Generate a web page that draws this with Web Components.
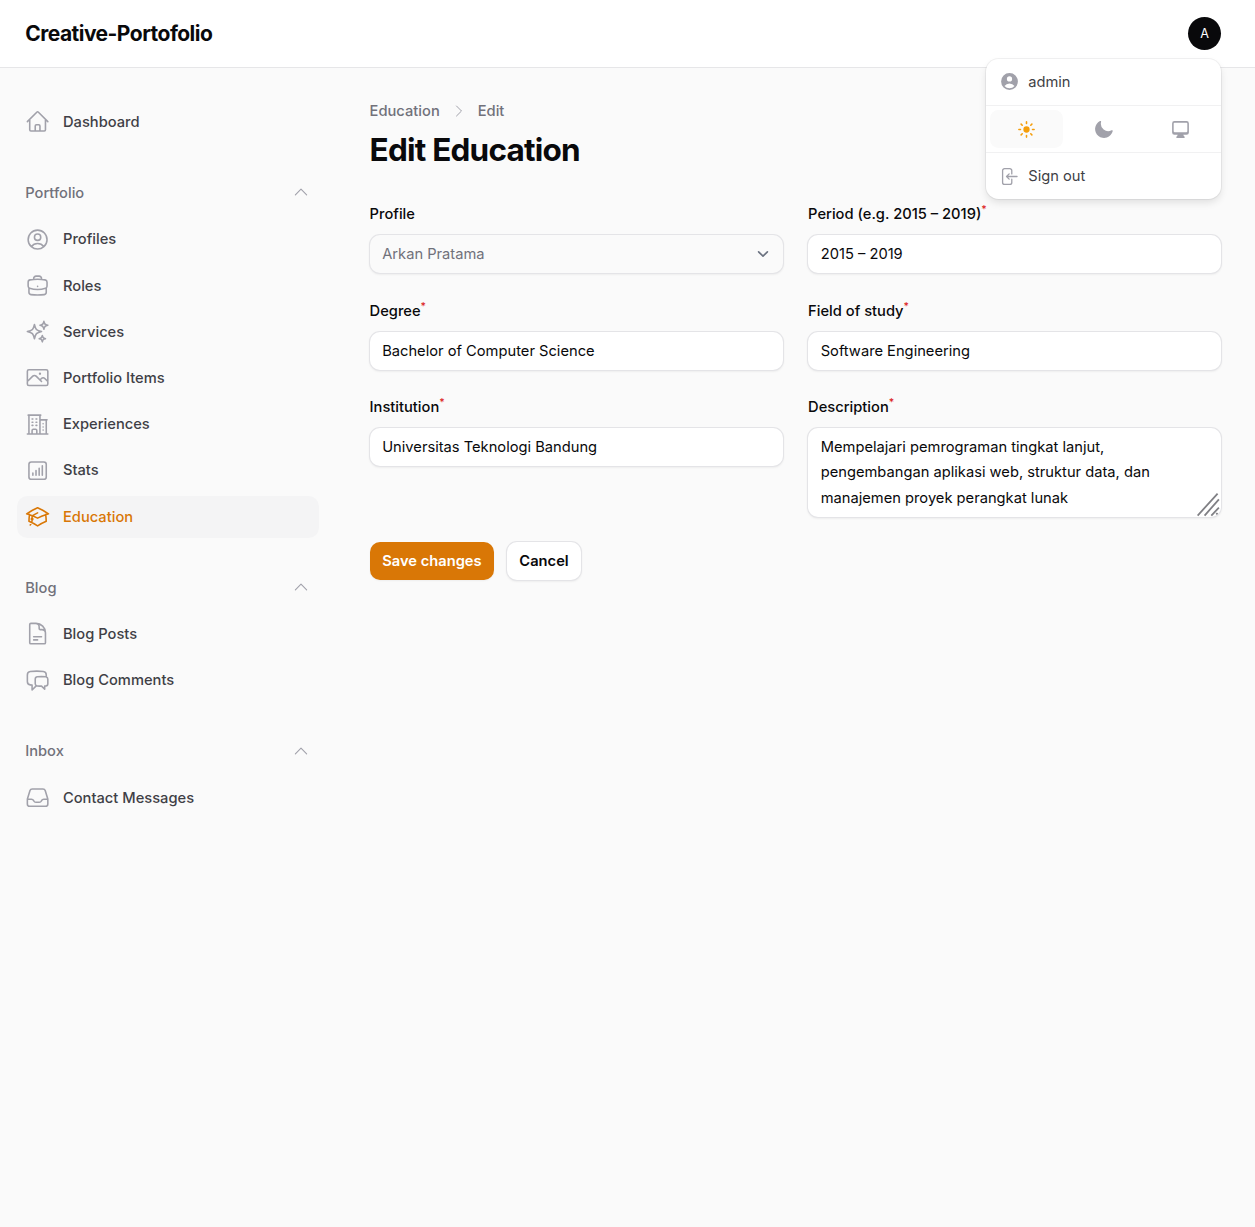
<!DOCTYPE html>
<html lang="en">
<head>
<meta charset="utf-8">
<title>Edit Education</title>
<style>
  html, body { margin: 0; padding: 0; background: #fafafa; }
  body { font-family: Inter, "Liberation Sans", sans-serif; color: #09090b; min-height: 1227px; }
</style>
</head>
<body>
<app-shell>
  <app-topbar slot="top" brand="Creative-Portofolio"></app-topbar>
  <app-sidebar slot="side">
    <nav-item icon="home" label="Dashboard"></nav-item>
    <nav-group label="Portfolio">
      <nav-item icon="user" label="Profiles"></nav-item>
      <nav-item icon="briefcase" label="Roles"></nav-item>
      <nav-item icon="sparkles" label="Services"></nav-item>
      <nav-item icon="photo" label="Portfolio Items"></nav-item>
      <nav-item icon="building" label="Experiences"></nav-item>
      <nav-item icon="chart" label="Stats"></nav-item>
      <nav-item icon="cap" label="Education" active></nav-item>
    </nav-group>
    <nav-group label="Blog">
      <nav-item icon="doc" label="Blog Posts"></nav-item>
      <nav-item icon="chat" label="Blog Comments"></nav-item>
    </nav-group>
    <nav-group label="Inbox">
      <nav-item icon="inbox" label="Contact Messages"></nav-item>
    </nav-group>
  </app-sidebar>
  <edit-page slot="main">
    <form-field label="Profile" value="Arkan Pratama" type="select"></form-field>
    <form-field label="Period (e.g. 2015 – 2019)" value="2015 – 2019" required></form-field>
    <form-field label="Degree" value="Bachelor of Computer Science" required></form-field>
    <form-field label="Field of study" value="Software Engineering" required></form-field>
    <form-field label="Institution" value="Universitas Teknologi Bandung" required></form-field>
    <form-field label="Description" type="textarea" required value="Mempelajari pemrograman tingkat lanjut,|pengembangan aplikasi web, struktur data, dan|manajemen proyek perangkat lunak"></form-field>
  </edit-page>
</app-shell>

<script>
const ICONS = {
  home: 'm2.25 12 8.954-8.955c.44-.439 1.152-.439 1.591 0L21.75 12M4.5 9.75v10.125c0 .621.504 1.125 1.125 1.125H9.75v-4.875c0-.621.504-1.125 1.125-1.125h2.25c.621 0 1.125.504 1.125 1.125V21h4.125c.621 0 1.125-.504 1.125-1.125V9.75M8.25 21h8.25',
  user: 'M17.982 18.725A7.488 7.488 0 0 0 12 15.75a7.488 7.488 0 0 0-5.982 2.975m11.963 0a9 9 0 1 0-11.963 0m11.963 0A8.966 8.966 0 0 1 12 21a8.966 8.966 0 0 1-5.982-2.275M15 9.75a3 3 0 1 1-6 0 3 3 0 0 1 6 0Z',
  briefcase: 'M20.25 14.15v4.25c0 1.094-.787 2.036-1.872 2.18-2.087.277-4.216.42-6.378.42s-4.291-.143-6.378-.42c-1.085-.144-1.872-1.086-1.872-2.18v-4.25m16.5 0a2.18 2.18 0 0 0 .75-1.661V8.706c0-1.081-.768-2.015-1.837-2.175a48.114 48.114 0 0 0-3.413-.387m4.5 8.006c-.194.165-.42.295-.673.38A23.978 23.978 0 0 1 12 15.75c-2.648 0-5.195-.429-7.577-1.22a2.016 2.016 0 0 1-.673-.38m0 0A2.18 2.18 0 0 1 3 12.489V8.706c0-1.081.768-2.015 1.837-2.175a48.111 48.111 0 0 1 3.413-.387m7.5 0V5.25A2.25 2.25 0 0 0 13.5 3h-3a2.25 2.25 0 0 0-2.25 2.25v.894m7.5 0a48.667 48.667 0 0 0-7.5 0M12 12.75h.008v.008H12v-.008Z',
  sparkles: 'M9.813 15.904 9 18.75l-.813-2.846a4.5 4.5 0 0 0-3.09-3.09L2.25 12l2.846-.813a4.5 4.5 0 0 0 3.09-3.09L9 5.25l.813 2.846a4.5 4.5 0 0 0 3.09 3.09L15.75 12l-2.846.813a4.5 4.5 0 0 0-3.09 3.09ZM18.259 8.715 18 9.75l-.259-1.035a3.375 3.375 0 0 0-2.455-2.456L14.25 6l1.036-.259a3.375 3.375 0 0 0 2.455-2.456L18 2.25l.259 1.035a3.375 3.375 0 0 0 2.456 2.456L21.75 6l-1.035.259a3.375 3.375 0 0 0-2.456 2.456ZM16.894 20.567 16.5 21.75l-.394-1.183a2.25 2.25 0 0 0-1.423-1.423L13.5 18.75l1.183-.394a2.25 2.25 0 0 0 1.423-1.423l.394-1.183.394 1.183a2.25 2.25 0 0 0 1.423 1.423l1.183.394-1.183.394a2.25 2.25 0 0 0-1.423 1.423Z',
  photo: 'm2.25 15.75 5.159-5.159a2.25 2.25 0 0 1 3.182 0l5.159 5.159m-1.5-1.5 1.409-1.409a2.25 2.25 0 0 1 3.182 0l2.909 2.909m-18 3.75h16.5a1.5 1.5 0 0 0 1.5-1.5V6a1.5 1.5 0 0 0-1.5-1.5H3.75A1.5 1.5 0 0 0 2.25 6v12a1.5 1.5 0 0 0 1.5 1.5Zm10.5-11.25h.008v.008h-.008V8.25Zm.375 0a.375.375 0 1 1-.75 0 .375.375 0 0 1 .75 0Z',
  building: 'M2.25 21h19.5m-18-18v18m10.5-18v18m6-13.5V21M6.75 6.75h.75m-.75 3h.75m-.75 3h.75m3-6h.75m-.75 3h.75m-.75 3h.75M6.75 21v-3.375c0-.621.504-1.125 1.125-1.125h2.25c.621 0 1.125.504 1.125 1.125V21M3 3h12m-.75 4.5H21m-3.75 3.75h.008v.008h-.008v-.008Zm0 3h.008v.008h-.008v-.008Zm0 3h.008v.008h-.008v-.008Z',
  chart: 'M7.5 14.25v2.25m3-4.5v4.5m3-6.75v6.75m3-9v9M6 20.25h12A2.25 2.25 0 0 0 20.25 18V6A2.25 2.25 0 0 0 18 3.75H6A2.25 2.25 0 0 0 3.75 6v12A2.25 2.25 0 0 0 6 20.25Z',
  cap: 'M4.26 10.147a60.438 60.438 0 0 0-.491 6.347A48.62 48.62 0 0 1 12 20.904a48.62 48.62 0 0 1 8.232-4.41 60.46 60.46 0 0 0-.491-6.347m-15.482 0a50.636 50.636 0 0 0-2.658-.813A59.906 59.906 0 0 1 12 3.493a59.903 59.903 0 0 1 10.399 5.84c-.896.248-1.783.52-2.658.814m-15.482 0A50.717 50.717 0 0 1 12 13.489a50.702 50.702 0 0 1 7.74-3.342M6.75 15a.75.75 0 1 0 0-1.5.75.75 0 0 0 0 1.5Zm0 0v-3.675A55.378 55.378 0 0 1 12 8.443m-7.007 11.55A5.981 5.981 0 0 0 6.75 15.75v-1.5',
  doc: 'M19.5 14.25v-2.625a3.375 3.375 0 0 0-3.375-3.375h-1.5A1.125 1.125 0 0 1 13.5 7.125v-1.5a3.375 3.375 0 0 0-3.375-3.375H8.25m0 12.75h7.5m-7.5 3H12M10.5 2.25H5.625c-.621 0-1.125.504-1.125 1.125v17.25c0 .621.504 1.125 1.125 1.125h12.75c.621 0 1.125-.504 1.125-1.125V11.25a9 9 0 0 0-9-9Z',
  chat: 'M20.25 8.511c.884.284 1.5 1.128 1.5 2.097v4.286c0 1.136-.847 2.1-1.98 2.193-.34.027-.68.052-1.02.072v3.091l-3-3c-1.354 0-2.694-.055-4.02-.163a2.115 2.115 0 0 1-.825-.242m9.345-8.334a2.126 2.126 0 0 0-.476-.095 48.64 48.64 0 0 0-8.048 0c-1.131.094-1.976 1.057-1.976 2.192v4.286c0 .837.46 1.58 1.155 1.951m9.345-8.334V6.637c0-1.621-1.152-3.026-2.76-3.235A48.455 48.455 0 0 0 11.25 3c-2.115 0-4.198.137-6.24.402-1.608.209-2.76 1.614-2.76 3.235v6.226c0 1.621 1.152 3.026 2.76 3.235.577.075 1.157.14 1.74.194V21l4.155-4.155',
  inbox: 'M2.25 13.5h3.86a2.25 2.25 0 0 1 2.012 1.244l.256.512a2.25 2.25 0 0 0 2.013 1.244h3.218a2.25 2.25 0 0 0 2.013-1.244l.256-.512a2.25 2.25 0 0 1 2.013-1.244h3.859m-19.5.338V18a2.25 2.25 0 0 0 2.25 2.25h15A2.25 2.25 0 0 0 21.75 18v-4.162c0-.224-.034-.447-.1-.661L19.24 5.338a2.25 2.25 0 0 0-2.15-1.588H6.911a2.25 2.25 0 0 0-2.15 1.588L2.35 13.177a2.25 2.25 0 0 0-.1.661Z',
  signout: 'M15.75 9V5.25A2.25 2.25 0 0 0 13.5 3h-6a2.25 2.25 0 0 0-2.25 2.25v13.5A2.25 2.25 0 0 0 7.5 21h6a2.25 2.25 0 0 0 2.25-2.25V15m-3 0-3-3m0 0 3-3m-3 3H21.75',
  chevronUp: 'm4.5 15.75 7.5-7.5 7.5 7.5',
  chevronRight: 'm8.25 4.5 7.5 7.5-7.5 7.5'
};

const SOLID = {
  user: 'M18 10a8 8 0 1 1-16 0 8 8 0 0 1 16 0Zm-5.5-2.5a2.5 2.5 0 1 1-5 0 2.5 2.5 0 0 1 5 0ZM10 12a5.99 5.99 0 0 0-4.793 2.39A6.483 6.483 0 0 0 10 16.5a6.483 6.483 0 0 0 4.793-2.11A5.99 5.99 0 0 0 10 12Z',
  sun: 'M10 2a.75.75 0 0 1 .75.75v1.5a.75.75 0 0 1-1.5 0v-1.5A.75.75 0 0 1 10 2ZM10 15a.75.75 0 0 1 .75.75v1.5a.75.75 0 0 1-1.5 0v-1.5A.75.75 0 0 1 10 15ZM10 7a3 3 0 1 0 0 6 3 3 0 0 0 0-6ZM15.657 5.404a.75.75 0 1 0-1.06-1.06l-1.061 1.06a.75.75 0 0 0 1.06 1.06l1.06-1.06ZM6.464 14.596a.75.75 0 1 0-1.06-1.06l-1.06 1.06a.75.75 0 0 0 1.06 1.06l1.06-1.06ZM18 10a.75.75 0 0 1-.75.75h-1.5a.75.75 0 0 1 0-1.5h1.5A.75.75 0 0 1 18 10ZM5 10a.75.75 0 0 1-.75.75h-1.5a.75.75 0 0 1 0-1.5h1.5A.75.75 0 0 1 5 10ZM14.596 15.657a.75.75 0 0 0 1.06-1.06l-1.06-1.061a.75.75 0 1 0-1.06 1.06l1.06 1.06ZM5.404 6.464a.75.75 0 0 0 1.06-1.06l-1.06-1.06a.75.75 0 1 0-1.061 1.06l1.06 1.06Z',
  moon: 'M7.455 2.004a.75.75 0 0 1 .26.77 7 7 0 0 0 9.958 7.967.75.75 0 0 1 1.067.853A8.5 8.5 0 1 1 6.647 1.921a.75.75 0 0 1 .808.083Z',
  desktop: 'M2 4.25A2.25 2.25 0 0 1 4.25 2h11.5A2.25 2.25 0 0 1 18 4.25v8.5A2.25 2.25 0 0 1 15.75 15h-3.105a3.501 3.501 0 0 0 1.1 1.677A.75.75 0 0 1 13.26 18H6.74a.75.75 0 0 1-.484-1.323A3.501 3.501 0 0 0 7.355 15H4.25A2.25 2.25 0 0 1 2 12.75v-8.5Zm1.5 0a.75.75 0 0 1 .75-.75h11.5a.75.75 0 0 1 .75.75v7.5a.75.75 0 0 1-.75.75H4.25a.75.75 0 0 1-.75-.75v-7.5Z'
};

function outline(name, size, color) {
  return `<svg width="${size}" height="${size}" viewBox="0 0 24 24" fill="none" stroke="${color}" stroke-width="1.5" stroke-linecap="round" stroke-linejoin="round"><path d="${ICONS[name]}"/></svg>`;
}
function solid(name, size, color) {
  return `<svg width="${size}" height="${size}" viewBox="0 0 20 20" fill="${color}"><path fill-rule="evenodd" clip-rule="evenodd" d="${SOLID[name]}"/></svg>`;
}

class AppShell extends HTMLElement {
  constructor() {
    super();
    this.attachShadow({ mode: 'open' });
    this.shadowRoot.innerHTML = `
      <style>
        :host { display: block; }
        .body { display: grid; grid-template-columns: 336px 1fr; }
      </style>
      <slot name="top"></slot>
      <div class="body">
        <slot name="side"></slot>
        <slot name="main"></slot>
      </div>`;
  }
}

class AppTopbar extends HTMLElement {
  constructor() {
    super();
    this.attachShadow({ mode: 'open' });
  }
  connectedCallback() {
    this.shadowRoot.innerHTML = `
      <style>
        :host { display: block; position: relative; z-index: 5; }
        .bar {
          height: 67px; background: #fff; border-bottom: 1px solid #e6e6e8;
          display: flex; align-items: center; justify-content: space-between;
          padding: 0 33.6px 0 25.2px;
        }
        .brand { font-size: 21px; font-weight: 700; letter-spacing: -0.025em; color: #09090b; }
        .avatar {
          width: 33.6px; height: 33.6px; border-radius: 50%; background: #09090b; color: #fff;
          display: flex; align-items: center; justify-content: center; font-size: 12.6px; font-weight: 400;
        }
      </style>
      <div class="bar">
        <div class="brand">${this.getAttribute('brand')}</div>
        <div class="avatar">A</div>
      </div>
      <user-menu></user-menu>`;
  }
}

class UserMenu extends HTMLElement {
  constructor() {
    super();
    this.attachShadow({ mode: 'open' });
    this.shadowRoot.innerHTML = `
      <style>
        :host {
          display: block; position: absolute; top: 58.8px; right: 33.6px; width: 235.2px;
          background: #fff; border-radius: 12.6px;
          box-shadow: 0 4px 8px -1px rgba(0,0,0,.12), 0 0 0 1px rgba(9,9,11,.05);
        }
        .row { display: flex; align-items: center; gap: 8.4px; height: 46.2px; padding: 0 12.6px; font-size: 14.7px; color: #3f3f46; }
        .out svg { margin-left: -1px; margin-right: 1px; }
        .line { height: 1px; background: #f1f1f2; }
        .themes { display: grid; grid-template-columns: repeat(3, 1fr); gap: 4.2px; padding: 4.2px; }
        .themes div { display: flex; align-items: center; justify-content: center; border-radius: 8.4px; height: 37.8px; }
        .themes .on { background: #fafafa; }
        svg { flex: none; display: block; }
      </style>
      <div class="row">${solid('user', 21, '#a1a1aa')}<span>admin</span></div>
      <div class="line"></div>
      <div class="themes">
        <div class="on">${solid('sun', 21, '#f59e0b')}</div>
        <div>${solid('moon', 21, '#a1a1aa')}</div>
        <div>${solid('desktop', 21, '#a1a1aa')}</div>
      </div>
      <div class="line"></div>
      <div class="row out">${outline('signout', 21, '#a1a1aa')}<span>Sign out</span></div>`;
  }
}

class AppSidebar extends HTMLElement {
  constructor() {
    super();
    this.attachShadow({ mode: 'open' });
    this.shadowRoot.innerHTML = `
      <style>
        :host { display: flex; flex-direction: column; gap: 38px; padding: 32.8px 16.8px 0; box-sizing: border-box; }
      </style>
      <slot></slot>`;
  }
}

class NavGroup extends HTMLElement {
  constructor() {
    super();
    this.attachShadow({ mode: 'open' });
  }
  connectedCallback() {
    this.shadowRoot.innerHTML = `
      <style>
        :host { display: flex; flex-direction: column; gap: 4.2px; }
        .head {
          display: flex; align-items: center; justify-content: space-between; height: 24px;
          margin-bottom: 9.4px; padding: 0 9.5px 0 8.4px; font-size: 14.7px; font-weight: 500; color: #71717a;
        }
        svg { display: block; margin-top: -1.5px; }
      </style>
      <div class="head"><span>${this.getAttribute('label')}</span>${outline('chevronUp', 18, '#a1a1aa')}</div>
      <slot></slot>`;
  }
}

class NavItem extends HTMLElement {
  constructor() {
    super();
    this.attachShadow({ mode: 'open' });
  }
  connectedCallback() {
    const active = this.hasAttribute('active');
    this.shadowRoot.innerHTML = `
      <style>
        :host { display: block; }
        .item {
          display: flex; align-items: center; gap: 12.6px; height: 42px; padding: 0 8.4px;
          border-radius: 10.5px; font-size: 14.7px; font-weight: 500;
          color: ${active ? '#d97706' : '#3f3f46'}; background: ${active ? '#f4f4f5' : 'transparent'};
        }
        svg { flex: none; display: block; }
      </style>
      <div class="item">${outline(this.getAttribute('icon'), 25.2, active ? '#d97706' : '#a1a1aa')}<span>${this.getAttribute('label')}</span></div>`;
  }
}

class EditPage extends HTMLElement {
  constructor() {
    super();
    this.attachShadow({ mode: 'open' });
    this.shadowRoot.innerHTML = `
      <style>
        :host { display: block; padding: 33px 33.6px 0; min-width: 0; }
        .crumbs { display: flex; align-items: center; gap: 11px; height: 20px; font-size: 14.7px; font-weight: 500; color: #71717a; }
        h1 { margin: 9px 0 0; font-size: 31.5px; line-height: 40px; font-weight: 700; letter-spacing: -0.025em; color: #09090b; }
        .grid { display: grid; grid-template-columns: 1fr 1fr; column-gap: 25.2px; row-gap: 27.8px; margin-top: 34.2px; }
        .actions { display: flex; gap: 12.6px; align-items: center; margin-top: 25px; }
        svg { display: block; }
      </style>
      <div class="crumbs"><span>Education</span>${outline('chevronRight', 16, '#a1a1aa')}<span>Edit</span></div>
      <h1>Edit Education</h1>
      <div class="grid"><slot></slot></div>
      <div class="actions">
        <app-button kind="primary">Save changes</app-button>
        <app-button>Cancel</app-button>
      </div>`;
  }
}

class FormField extends HTMLElement {
  constructor() {
    super();
    this.attachShadow({ mode: 'open' });
  }
  connectedCallback() {
    const type = this.getAttribute('type') || 'text';
    const value = this.getAttribute('value');
    const star = this.hasAttribute('required') ? '<sup>*</sup>' : '';
    let control = '';
    if (type === 'select') {
      control = `<div class="box select"><span>${value}</span>
        <svg width="22" height="22" viewBox="0 0 20 20" fill="none" stroke="#6b7280" stroke-width="1.5" stroke-linecap="round" stroke-linejoin="round"><path d="m6 8 4 4 4-4"/></svg></div>`;
    } else if (type === 'textarea') {
      const lines = value.split('|').map(l => `<div>${l}</div>`).join('');
      control = `<div class="box area">${lines}
        <svg class="grip" width="24" height="24" viewBox="0 0 24 24" stroke="#808085" stroke-width="1.8" fill="none">
          <path d="M.6 22.6 20.6.6M7.6 22.6 21.9 6.3M14.3 22.6 21.9 14.6M19.3 21.3 20.5 20"/>
        </svg></div>`;
    } else {
      control = `<div class="box">${value}</div>`;
    }
    this.shadowRoot.innerHTML = `
      <style>
        :host { display: block; min-width: 0; font-size: 14.7px; }
        label { display: block; height: 20px; line-height: 20px; margin-bottom: 11px; font-weight: 500; color: #09090b; }
        sup { color: #dc2626; font-size: 10.5px; line-height: 0; vertical-align: 6px; font-weight: 500; }
        .box {
          box-sizing: border-box; height: 37.8px; display: flex; align-items: center; padding: 0 12.6px;
          background: #fff; border-radius: 10px;
          box-shadow: 0 0 0 1px #e4e4e7, 0 1px 2px 1px rgba(0,0,0,.05); color: #09090b; position: relative;
        }
        .select { justify-content: space-between; background: #fafafa; color: #71717a; padding-right: 9px; }
        .area { display: block; height: 89px; padding: 6.3px 12.6px; line-height: 25.6px; }
        .grip { position: absolute; right: 0; bottom: 0; }
      </style>
      <label>${this.getAttribute('label')}${star}</label>
      ${control}`;
  }
}

class AppButton extends HTMLElement {
  constructor() {
    super();
    this.attachShadow({ mode: 'open' });
  }
  connectedCallback() {
    const primary = this.getAttribute('kind') === 'primary';
    this.shadowRoot.innerHTML = `
      <style>
        :host { display: block; }
        .btn {
          box-sizing: border-box; display: flex; align-items: center; justify-content: center;
          height: 37.8px; padding: 0 12.6px; border-radius: 10px; font-size: 14.7px; font-weight: 600;
          ${primary
            ? 'background: #d97706; color: #fff; box-shadow: 0 1px 2px rgba(0,0,0,.05);'
            : 'background: #fff; color: #09090b; box-shadow: 0 0 0 1px #e4e4e7, 0 1px 2px 1px rgba(0,0,0,.05);'}
        }
      </style>
      <div class="btn"><slot></slot></div>`;
  }
}

customElements.define('app-shell', AppShell);
customElements.define('user-menu', UserMenu);
customElements.define('app-topbar', AppTopbar);
customElements.define('nav-item', NavItem);
customElements.define('nav-group', NavGroup);
customElements.define('app-sidebar', AppSidebar);
customElements.define('app-button', AppButton);
customElements.define('form-field', FormField);
customElements.define('edit-page', EditPage);
</script>
</body>
</html>
